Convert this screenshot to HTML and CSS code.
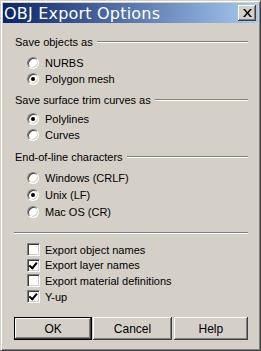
FILE: index.html
```html
<!DOCTYPE html>
<html>
<head>
    <title>OBJ Export Options</title>
    <link rel="stylesheet" href="styles.css">
</head>
<body>
    <div class="window">
        <div class="titlebar">
            <span class="title">OBJ Export Options</span>
            <button class="close-button">
                <svg width="9" height="8" viewBox="0 0 9 8">
                    <path d="M0 0h2l2.5 3 2.5-3h2l-3.5 4 3.5 4h-2l-2.5-3-2.5 3h-2l3.5-4z" fill="#000"/>
                </svg>
            </button>
        </div>

        <div class="content">
            <div class="group-label"><span>Save objects as</span></div>
            <div class="options group-one">
                <label class="option"><span class="radio"></span>NURBS</label>
                <label class="option"><span class="radio checked"></span>Polygon mesh</label>
            </div>

            <div class="group-label"><span>Save surface trim curves as</span></div>
            <div class="options group-two">
                <label class="option"><span class="radio checked"></span>Polylines</label>
                <label class="option"><span class="radio"></span>Curves</label>
            </div>

            <div class="group-label"><span>End-of-line characters</span></div>
            <div class="options group-three">
                <label class="option"><span class="radio"></span>Windows (CRLF)</label>
                <label class="option"><span class="radio checked"></span>Unix (LF)</label>
                <label class="option"><span class="radio"></span>Mac OS (CR)</label>
            </div>

            <div class="separator"></div>

            <div class="checks">
                <label class="option"><span class="checkbox"></span>Export object names</label>
                <label class="option"><span class="checkbox checked"></span>Export layer names</label>
                <label class="option"><span class="checkbox"></span>Export material definitions</label>
                <label class="option"><span class="checkbox checked"></span>Y-up</label>
            </div>

            <div class="button-row">
                <button class="dialog-button default">OK</button>
                <button class="dialog-button">Cancel</button>
                <button class="dialog-button">Help</button>
            </div>
        </div>
    </div>
</body>
</html>
```

FILE: styles.css
```css
body {
    margin: 0;
    background-color: #d4d0c8;
    font-family: "Liberation Sans", Arial, sans-serif;
    font-size: 11px;
    color: #000000;
}

.window {
    width: 261px;
    height: 351px;
    box-sizing: border-box;
    background-color: #d4d0c8;
    border-top: 1px solid #d4d0c8;
    border-left: 1px solid #d4d0c8;
    border-right: 1px solid #404040;
    border-bottom: 1px solid #404040;
    box-shadow: inset 1px 1px 0 #ffffff, inset -1px -1px 0 #808080;
    padding: 2px;
}

.titlebar {
    height: 20px;
    display: flex;
    align-items: center;
    justify-content: space-between;
    background: linear-gradient(to right, #0a246a, #a6caf0);
    padding: 0 2px 0 1px;
}

.title {
    color: #ffffff;
    font-family: "DejaVu Sans", sans-serif;
    font-size: 16px;
    letter-spacing: 0.2px;
}

.close-button {
    width: 18px;
    height: 16px;
    padding: 0;
    display: flex;
    align-items: center;
    justify-content: center;
    background-color: #d4d0c8;
    border: none;
    box-shadow: inset -1px -1px 0 #404040, inset 1px 1px 0 #ffffff, inset -2px -2px 0 #808080;
}

.content {
    padding: 11px 10px 0 11px;
}

.group-label {
    display: flex;
    align-items: center;
    height: 16px;
    padding-left: 1px;
}

.group-label::after {
    content: "";
    flex-grow: 1;
    margin-left: 4px;
    border-top: 1px solid #808080;
    border-bottom: 1px solid #ffffff;
}

.options {
    display: flex;
    flex-direction: column;
    padding-left: 13px;
}

.group-one {
    margin: 5px 0 5px;
}

.group-two {
    margin: 3px 0 6px;
}

.group-three {
    margin: 5px 0 12px;
    gap: 1px;
}

.option {
    display: flex;
    align-items: center;
    height: 16px;
}

.radio {
    width: 12px;
    height: 12px;
    box-sizing: border-box;
    border-radius: 50%;
    border: 1px solid;
    border-color: #808080 #ffffff #ffffff #808080;
    background-color: #ffffff;
    box-shadow: inset 1px 1px 0 #404040, inset -1px -1px 0 #d4d0c8;
    margin-right: 6px;
    position: relative;
}

.radio.checked::after {
    content: "";
    position: absolute;
    left: 3px;
    top: 3px;
    width: 4px;
    height: 4px;
    border-radius: 50%;
    background-color: #000000;
}

.separator {
    border-top: 1px solid #808080;
    border-bottom: 1px solid #ffffff;
    margin-bottom: 8px;
}

.checks {
    display: flex;
    flex-direction: column;
    padding-left: 13px;
}

.checks .option {
    height: 15.6px;
}

.checkbox {
    width: 13px;
    height: 13px;
    box-sizing: border-box;
    border: 1px solid;
    border-color: #808080 #ffffff #ffffff #808080;
    background-color: #ffffff;
    box-shadow: inset 1px 1px 0 #404040, inset -1px -1px 0 #d4d0c8;
    margin-right: 5px;
    position: relative;
}

.checkbox.checked::after {
    content: "";
    position: absolute;
    left: 2px;
    top: 1px;
    width: 3px;
    height: 6px;
    border-right: 2px solid #000000;
    border-bottom: 2px solid #000000;
    transform: rotate(40deg);
    transform-origin: 60% 60%;
}

.button-row {
    display: flex;
    margin-top: 13px;
    gap: 1px;
}

.dialog-button {
    width: 79px;
    height: 23px;
    font-family: "Liberation Sans", Arial, sans-serif;
    font-size: 12px;
    background-color: #d4d0c8;
    border: none;
    padding: 0;
    box-shadow: inset -1px -1px 0 #404040, inset 1px 1px 0 #ffffff, inset -2px -2px 0 #808080;
}

.dialog-button:last-child {
    width: 75px;
    margin-left: 1px;
}

.dialog-button.default {
    border: 1px solid #000000;
    box-shadow: inset -1px -1px 0 #404040, inset 1px 1px 0 #ffffff, inset -2px -2px 0 #808080;
}
```
